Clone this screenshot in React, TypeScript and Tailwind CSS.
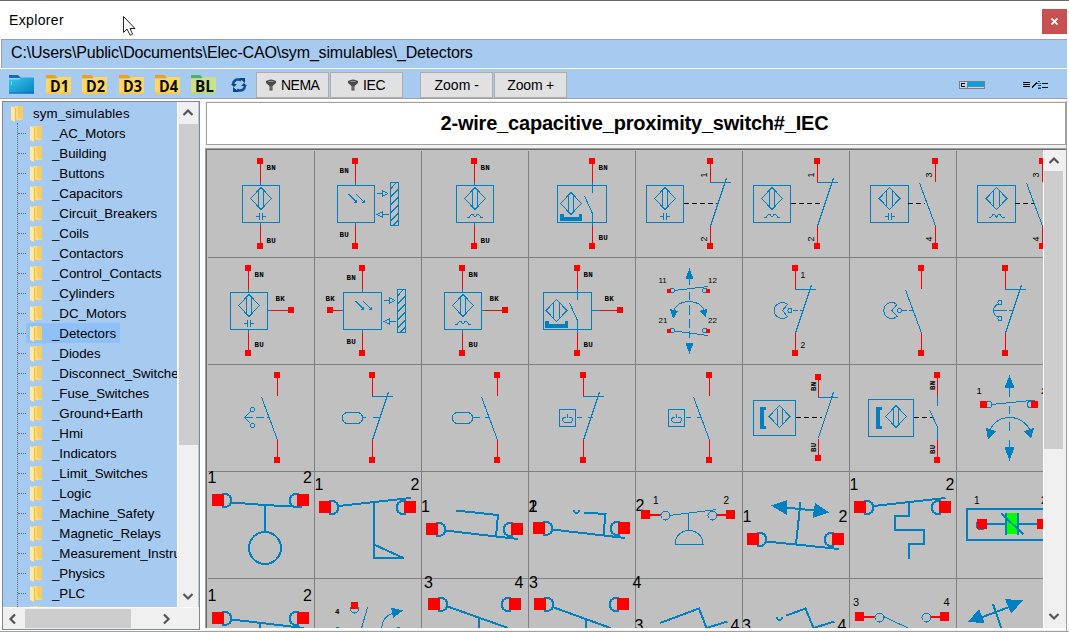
import React from "react";

const BLUE = "#0080c0";
const RED = "#ff0000";

/* ---------- drawing primitives (sheet coordinates) ---------- */

const B = ({ d, w = 1, dash }: { d: string; w?: number; dash?: string }) => (
  <path d={d} fill="none" stroke={BLUE} strokeWidth={w} strokeDasharray={dash} />
);
const F = ({ d }: { d: string }) => <path d={d} fill={BLUE} />;
const R = ({ d, w = 1 }: { d: string; w?: number }) => (
  <path d={d} fill="none" stroke={RED} strokeWidth={w} />
);
const K = ({ x1, x2, y }: { x1: number; x2: number; y: number }) => (
  <path d={`M${x1} ${y}H${x2}`} stroke="#000" strokeDasharray="5 3" fill="none" />
);
const Sq = ({ x, y, s = 6 }: { x: number; y: number; s?: number }) => (
  <rect x={x - s / 2} y={y - s / 2} width={s} height={s} fill={RED} />
);
const Box = ({ x, y, w, h, rx = 0, sw = 1 }: { x: number; y: number; w: number; h: number; rx?: number; sw?: number }) => (
  <rect x={x} y={y} width={w} height={h} rx={rx} fill="none" stroke={BLUE} strokeWidth={sw} />
);
const Ring = ({ x, y, r, w = 1 }: { x: number; y: number; r: number; w?: number }) => (
  <circle cx={x} cy={y} r={r} fill="none" stroke={BLUE} strokeWidth={w} />
);

/* two-letter wire colour code */
const Wire = ({ x, y, t, turn }: { x: number; y: number; t: string; turn?: boolean }) => (
  <text
    x={x}
    y={y}
    transform={turn ? `rotate(-90 ${x} ${y})` : undefined}
    fontFamily="'Liberation Mono', monospace"
    fontWeight="700"
    fontSize="7.5"
    letterSpacing="0.3"
    fill="#000"
  >
    {t}
  </text>
);
const Num = ({ x, y, t, s = 16, turn }: { x: number; y: number; t: string; s?: number; turn?: boolean }) => (
  <text
    x={x}
    y={y}
    transform={turn ? `rotate(-90 ${x} ${y})` : undefined}
    fontFamily="'Liberation Sans', sans-serif"
    fontSize={s}
    fill="#000"
  >
    {t}
  </text>
);

const Diamond = ({ x, y, b = 2.5 }: { x: number; y: number; b?: number }) => (
  <B
    d={`M${x - 10.5} ${y}L${x} ${y - 11}L${x + 10.5} ${y}L${x} ${y + 11}ZM${x - b} ${y - 8}V${y + 8}M${x + b} ${y - 8}V${y + 8}`}
  />
);
const Cap = ({ x, y }: { x: number; y: number }) => (
  <B d={`M${x - 5} ${y}h3.5M${x - 1.5} ${y - 4}v7M${x + 1.5} ${y - 4}v7M${x + 1.5} ${y}h3.5`} />
);
const Coil = ({ x, y }: { x: number; y: number }) => (
  <B d={`M${x - 8} ${y + 1}h2l2.5-3h1.5l2 2.500l2-2.500h1.500l2.500 3h2`} />
);
const Cup = ({ x, y, w }: { x: number; y: number; w: number }) => (
  <F d={`M${x} ${y}h4v3h${w - 7}v-3h3v7h${-w}z`} />
);
const Bracket = ({ x, y }: { x: number; y: number }) => <F d={`M${x} ${y}h6v3h-2v16h2v3h-6z`} />;

/* vertical pole: terminals at top and bottom with red leads */
const Pole = ({ x, y }: { x: number; y: number }) => (
  <>
    <R d={`M${x + 0.5} ${y}v21M${x + 0.5} ${y + 65}v20`} />
    <Sq x={x} y={y} />
    <Sq x={x} y={y + 85} />
  </>
);
const NC = ({ x, y }: { x: number; y: number }) => (
  <B d={`M${x} ${y + 21.5}h21M${x + 16.5} ${y + 17}L${x + 0.5} ${y + 65}`} />
);
const NO = ({ x, y }: { x: number; y: number }) => <B d={`M${x - 15.5} ${y + 22}L${x + 0.5} ${y + 65}`} />;

const Photo = ({ x, y }: { x: number; y: number }) => (
  <>
    <B d={`M${x} ${y}l8 8M${x + 7.5} ${y}l8 8`} />
    <F d={`M${x + 8.5} ${y + 8.5}h-3l3-3zM${x + 16} ${y + 8.5}h-3l3-3z`} />
    <B d={`M${x + 28} ${y - 0.5}h6m6 0l-6-2.500v5l6-2.500M${x + 40} ${y + 20.5}h-6m-6 0l6-2.500v5l-6-2.500`} />
    <Box x={x + 42} y={y - 11.5} w={8} h={43} />
    <B
      d={`M${x + 42} ${y - 5}l6-6.5M${x + 42} ${y + 3}l8-8M${x + 42} ${y + 11}l8-8M${x + 42} ${y + 19}l8-8M${x + 42} ${y + 27}l8-8M${x + 45} ${y + 31}l5-5`}
    />
  </>
);

/* large horizontal contact: x,y is the top-left of the left terminal */
const Lugs = ({ x, y, gap = 85 }: { x: number; y: number; gap?: number }) => (
  <>
    <B w={2} d={`M${x + 10} ${y}h4q5 1 5 6.5q0 5.5-5 6.5h-4M${x + gap + 2} ${y}h-4q-5 1-5 6.5q0 5.5 5 6.5h4`} />
    <rect x={x} y={y} width="12" height="12" fill={RED} />
    <rect x={x + gap} y={y} width="12" height="12" fill={RED} />
  </>
);
const Terminals = ({ x, y }: { x: number; y: number }) => (
  <>
    <R w={2} d={`M${x} ${y}h16M${x + 72} ${y}h10`} />
    <Sq x={x + 0.5} y={y - 0.5} s={9} />
    <Sq x={x + 85.5} y={y - 0.5} s={9} />
    <Ring x={x + 20.5} y={y + 0.5} r={4.5} />
    <Ring x={x + 67.5} y={y + 0.5} r={4.5} />
  </>
);
const Mushroom = ({ x, y }: { x: number; y: number }) => (
  <>
    <B d={`M${x + 5} ${y - 6}a8 8 0 1 0 0 12l-5-6l5-6`} />
    <Ring x={x + 7.5} y={y} r={2} />
    <B d={`M${x + 10} ${y}h11`} dash="5 2" />
  </>
);
const Foot = ({ x, y }: { x: number; y: number }) => (
  <>
    <B d={`M${x} ${y}h25`} dash="8 3" />
    <B d={`M${x + 6} ${y - 6}L${x} ${y}L${x + 6} ${y + 6}`} />
    <Ring x={x + 8} y={y - 8} r={2} />
    <Ring x={x + 8} y={y + 8} r={2} />
  </>
);
const Key = ({ x, y }: { x: number; y: number }) => (
  <>
    <Box x={x} y={y} w={16} h={17} />
    <B d={`M${x + 8} ${y + 4}v4M${x + 6} ${y + 8}h-2q-2 3 1 5h6q4-3 1-5h-3M${x + 7} ${y + 13}h5`} />
    <B d={`M${x + 17} ${y + 8}h5M${x + 28} ${y + 8}h5`} />
  </>
);

/* ---------- symbol library, one entry for each tile ---------- */

const SYMBOLS: React.ReactNode[] = [
  // row 1
  <>
    <Pole x={260} y={161} /><B d="M260.5 182v4M260.5 222v4" /><Box x={242.5} y={185.5} w={37} h={37} />
    <Diamond x={261} y={198.5} /><Cap x={261} y={216.5} /><Wire x={266.5} y={170} t="BN" /><Wire x={266.5} y={243} t="BU" />
  </>,
  <>
    <Pole x={355} y={161} /><B d="M355.5 182v4M355.5 222v4" /><Box x={337.5} y={185.5} w={37} h={37} />
    <Photo x={348.5} y={194} /><Wire x={339.5} y={173} t="BN" /><Wire x={339.5} y={237} t="BU" />
  </>,
  <>
    <Pole x={474} y={161} /><B d="M474.5 182v4M474.5 222v4" /><Box x={456.5} y={185.5} w={37} h={37} />
    <Diamond x={475} y={198.5} /><Coil x={475} y={216.5} /><Wire x={480.5} y={170} t="BN" /><Wire x={480.5} y={243} t="BU" />
  </>,
  <>
    <Pole x={592} y={161} /><B d="M592.5 182v11M584.5 196L592.5 213.5V226" /><Box x={557.5} y={185.5} w={49} h={37} />
    <Diamond x={571} y={203.5} /><Cup x={560} y={214} w={22} /><Wire x={598.5} y={170} t="BN" /><Wire x={598.5} y={240} t="BU" />
  </>,
  <>
    <Pole x={710} y={161} /><NC x={710} y={161} /><Box x={646.5} y={185.5} w={37} h={37} />
    <Diamond x={665} y={198.5} /><Cap x={665} y={216.5} /><K x1={684} x2={717} y={203.5} />
    <Num x={707} y={177.5} t="1" s={9} turn /><Num x={707} y={241.5} t="2" s={9} turn />
  </>,
  <>
    <Pole x={817} y={161} /><NC x={817} y={161} /><Box x={753.5} y={185.5} w={37} h={37} />
    <Diamond x={772} y={198.5} /><Coil x={772} y={216.5} /><K x1={791} x2={822} y={203.5} />
    <Num x={814} y={177.5} t="1" s={9} turn /><Num x={814} y={241.5} t="2" s={9} turn />
  </>,
  <>
    <Pole x={935} y={161} /><NO x={935} y={161} /><Box x={870.5} y={185.5} w={38} h={37} />
    <Diamond x={889.5} y={198.5} b={3} /><Cap x={890} y={216.5} /><K x1={908} x2={925} y={203.5} />
    <Num x={931.5} y={177.5} t="3" s={9} turn /><Num x={931.5} y={241.5} t="4" s={9} turn />
  </>,
  <>
    <Pole x={1042} y={161} /><NO x={1042} y={161} /><Box x={977.5} y={185.5} w={38} h={37} />
    <Diamond x={996.5} y={198.5} b={3} /><Coil x={996.5} y={216.5} /><K x1={1015} x2={1034} y={203.5} />
    <Num x={1038.5} y={177.5} t="3" s={9} turn /><Num x={1038.5} y={241.5} t="4" s={9} turn />
  </>,
  // row 2
  <>
    <Pole x={248} y={268} /><B d="M248.5 289v4M248.5 329v4M268 310.5h4" /><R d="M271 310.5h18" /><Sq x={291} y={310} />
    <Box x={230.5} y={292.5} w={37} h={37} /><Diamond x={249} y={305.5} /><Cap x={249} y={323.5} />
    <Wire x={254.5} y={277} t="BN" /><Wire x={275.5} y={301} t="BK" /><Wire x={254.5} y={347} t="BU" />
  </>,
  <>
    <Pole x={362} y={268} /><B d="M362.5 289v4M362.5 329v4M340 310.5h4" /><R d="M330 310.5h11" /><Sq x={330} y={310} />
    <Box x={343.5} y={292.5} w={38} h={37} /><Photo x={355.5} y={301} />
    <Wire x={346.5} y={280} t="BN" /><Wire x={325.5} y={301} t="BK" /><Wire x={346.5} y={344} t="BU" />
  </>,
  <>
    <Pole x={462} y={268} /><B d="M462.5 289v4M462.5 329v4M482 310.5h4" /><R d="M485 310.5h18" /><Sq x={505} y={310} />
    <Box x={444.5} y={292.5} w={37} h={37} /><Diamond x={463} y={305.5} /><Coil x={463} y={323.5} />
    <Wire x={468.5} y={277} t="BN" /><Wire x={489.5} y={301} t="BK" /><Wire x={468.5} y={347} t="BU" />
  </>,
  <>
    <Pole x={577} y={268} /><B d="M577.5 289v11M569.5 303L577.5 320.5V333M592 310.5h8" /><R d="M600 310.5h18" /><Sq x={620} y={310} />
    <Box x={543.5} y={292.5} w={48} h={37} /><Diamond x={556.5} y={310.5} b={3} /><Cup x={545} y={321} w={23} />
    <Wire x={583.5} y={277} t="BN" /><Wire x={604.5} y={301} t="BK" /><Wire x={583.5} y={347} t="BU" />
  </>,
  <>
    <B d="M689.5 279v6M689.5 292v8M689.5 305v10M689.5 319v9M689.5 331v7" />
    <F d="M689.5 268l4 11h-8zM689.5 354l4-11h-8zM670 309l8 2l-5 8zM707 309l-8 2l7 7z" />
    <B d="M673 312Q677 301.5 689 301.5T705 312M674 290.5L708 286.5M674 331L708 335.5" />
    <Ring x={672} y={290.5} r={2.5} /><Ring x={705} y={290.5} r={2.5} /><Ring x={672} y={330.5} r={2.5} /><Ring x={705} y={330.5} r={2.5} />
    <Sq x={669} y={291} s={4} /><Sq x={708} y={291} s={4} /><Sq x={669} y={331} s={4} /><Sq x={708} y={331} s={4} />
    <Num x={658.5} y={283} t="11" s={8} /><Num x={708} y={283} t="12" s={8} /><Num x={658.5} y={323} t="21" s={8} /><Num x={708} y={323} t="22" s={8} />
  </>,
  <>
    <Pole x={795} y={268} /><NC x={795} y={268} /><Mushroom x={782.5} y={310.5} />
    <Num x={800.5} y={277.5} t="1" s={8.5} /><Num x={800.5} y={347.5} t="2" s={8.5} />
  </>,
  <><Pole x={921} y={268} /><NO x={921} y={268} /><Mushroom x={892} y={310.5} /></>,
  <>
    <Pole x={1005} y={268} /><NC x={1005} y={268} /><B d="M992.5 310.5h20" dash="14 2" />
    <B d="M998 304Q994 306 993.5 310.5Q994 316 998 317" /><Ring x={1000} y={302.5} r={2} /><Ring x={1000} y={318.5} r={2} />
  </>,
  // row 3
  <><Pole x={277} y={375} /><NO x={277} y={375} /><Foot x={244.5} y={417.5} /></>,
  <><Pole x={372} y={375} /><NC x={372} y={375} /><Box x={342.5} y={412.5} w={20} h={11} rx={5} /><B d="M363 417.5h3M373 417.5h6" /></>,
  <><Pole x={497} y={375} /><NO x={497} y={375} /><Box x={452.5} y={412.5} w={20} h={11} rx={5} /><B d="M473 417.5h7M485 417.5h5" /></>,
  <><Pole x={583} y={375} /><NC x={583} y={375} /><Key x={559.5} y={409.5} /></>,
  <><Pole x={709} y={375} /><NO x={709} y={375} /><Key x={668.5} y={409.5} /></>,
  <>
    <R d="M818.5 377v20M818.5 439v19" /><Sq x={818} y={377} /><Sq x={818} y={458} />
    <B d="M818 397.5h20M833.5 392L818.5 438" /><Box x={753.5} y={400.5} w={42} h={35} />
    <Bracket x={760} y={407} /><Diamond x={779.5} y={416.5} /><K x1={796} x2={822} y={417.5} />
    <Wire x={816} y={391} t="BN" turn /><Wire x={816} y={452} t="BU" turn />
  </>,
  <>
    <R d="M937.5 375v21M937.5 440v20" /><Sq x={937} y={375} /><Sq x={937} y={460} />
    <B d="M937.5 396v10M929.5 410L937.5 427V440" /><Box x={868.5} y={399.5} w={45} h={37} />
    <Bracket x={876} y={407} /><Diamond x={896} y={416.5} /><K x1={914} x2={932} y={417.5} />
    <Wire x={935} y={390} t="BN" turn /><Wire x={935} y={454} t="BU" turn />
  </>,
  <>
    <B d="M1009.5 388v9M1009.5 406v8M1009.5 422v9M1009.5 440v8" />
    <F d="M1009.5 375l5 13h-10zM1009.5 461l5-14h-10zM986 428l10 3l-8 9zM1034 428l-10 3l7 8z" />
    <B d="M990 430Q996 417.5 1009.5 417.5T1030 430M991.5 404.5L1035.5 400" />
    <Ring x={988.5} y={404.5} r={3.5} /><Ring x={1031} y={404.5} r={3.5} />
    <Sq x={983.5} y={404.5} s={7} /><Sq x={1034.5} y={404.5} s={7} />
    <Num x={976.5} y={393.5} t="1" s={9.5} /><Num x={1041} y={393.5} t="2" s={9.5} />
  </>,
  // row 4
  <>
    <Num x={207.5} y={482.5} t="1" /><Num x={303} y={482.5} t="2" /><Lugs x={212} y={494} />
    <B w={2} d="M231.5 502.5L265 505L302 507M265 505V532" /><Ring x={265} y={548} r={16} w={2} />
  </>,
  <>
    <Num x={314.5} y={489.5} t="1" /><Num x={410.5} y={489.5} t="2" /><Lugs x={319} y={501} />
    <B w={2} d="M339 506L411 498M374 502V558H403.5L375 545" />
  </>,
  <>
    <Num x={421} y={512} t="1" /><Num x={528.5} y={512} t="2" /><Lugs x={426} y={523} />
    <B w={2} d="M445.5 530.5L496 536.5L518 539M456 510.5L498 515L496 537" />
  </>,
  <>
    <Num x={528.5} y={512} t="1" /><Num x={635.5} y={511} t="2" /><Lugs x={533} y={522} />
    <B w={2} d="M552 529.5L604 535.5L625 538M584 512.5L605.5 514L603.5 535" />
    <F d="M573 510h2v2h3v-2h2v2h-1v1h-1v1h-3v-1h-1v-1h-1z" />
  </>,
  <>
    <Terminals x={645} y={515} /><B d="M669.5 515.5L716.5 509.5M688.5 513.5V531M674.5 544.5H703.5M675 544C676 526 702 526 703 544" />
    <Num x={653} y={504} t="1" s={10} /><Num x={723.5} y={504} t="2" s={10} />
  </>,
  <>
    <Num x={742.5} y={521.5} t="1" /><Num x={838.5} y={521.5} t="2" /><Lugs x={747} y={533} />
    <B w={2} d="M766 541.5L796 544.5L839 549M800.5 502L796 544M786 507.5L814 510.5" />
    <F d="M771 505.5L787 500V515ZM829 512.5L815 503L812.5 518Z" />
  </>,
  <>
    <Num x={849.5} y={489.5} t="1" /><Num x={945.5} y={489.5} t="2" /><Lugs x={854} y={501} />
    <B w={2} d="M873.5 506L945.5 498M909 502V516H895V530H924V544H909V559" />
  </>,
  <>
    <Box x={967} y={509} w={90} h={31} sw={2} /><B w={2} d="M987 524h19M1019 524h20" />
    <Ring x={981} y={525} r={5} /><Sq x={982} y={524} s={10} /><Sq x={1042} y={524} s={10} />
    <rect x="1007" y="513" width="11" height="21" fill="#00ff00" />
    <B w={2} d="M1006 513v22M1018 513v22M1001.5 513.5L1023.5 534.5" />
    <Num x={974} y={504} t="1" s={10} /><Num x={1041} y={504} t="2" s={10} />
  </>,
  // row 5
  <>
    <Num x={207.5} y={601} t="1" /><Num x={303} y={601} t="2" /><Lugs x={212} y={612} />
    <B w={2} d="M231.5 619.5L304 628M260 623v10" />
  </>,
  <>
    <Wire x={335} y={614} t="4" /><Ring x={354.5} y={609} r={4} /><Sq x={354.5} y={605.5} s={7} />
    <B d="M367.5 607.5L361 630M381.5 628Q383 616 393 613M336 627.5h3M397 627.5h3" /><F d="M391 607.5L403 610.5L393 618Z" />
  </>,
  <>
    <Num x={424} y={588} t="3" /><Num x={514.5} y={588} t="4" /><Lugs x={428} y={598} gap={81} />
    <B w={2} d="M447.5 606.5L508 628M479 618v12" />
  </>,
  <>
    <Num x={529} y={588} t="3" /><Num x={632.5} y={588} t="4" /><Lugs x={534} y={598} gap={83} />
    <B w={2} d="M552.5 607L610.5 628M586 620v12" />
  </>,
  <><Num x={634.5} y={631} t="3" /><Num x={730.5} y={631} t="4" /><B w={2} d="M660 623L699 608.5L706.5 628L727.5 621.5" /></>,
  <>
    <Num x={742} y={631} t="3" /><Num x={837.5} y={631} t="4" />
    <B w={2} d="M786.5 615.5L805.5 608.5L813.5 628L834.5 621.5" />
    <F d="M776 617h2v2h3v-2h2v2h-1v1h-1v1h-3v-1h-1v-1h-1z" />
  </>,
  <>
    <Num x={853} y={606} t="3" s={11} /><Num x={943.5} y={606} t="4" s={11} /><Terminals x={859} y={617} />
    <B d="M883.5 616.5L908 628" />
  </>,
  <>
    <B w={2} d="M980 618L1012 606M993 604L1002 630" />
    <F d="M968 622L979 609L984.5 623ZM1023 600.5L1005 599L1011 613.5Z" />
  </>,
];

const TILE = 107;
const ORIGIN_X = 208;
const ORIGIN_Y = 151;

const Tile = ({ index, children }: { index: number; children: React.ReactNode }) => {
  const x = ORIGIN_X + (index % 8) * TILE;
  const y = ORIGIN_Y + Math.floor(index / 8) * TILE;
  return (
    <div className="h-[107px] w-[107px] border-r border-b border-[#808080]">
      <svg
        width="107"
        height="107"
        viewBox={`${x} ${y} ${TILE} ${TILE}`}
        className="block overflow-visible"
        shapeRendering="crispEdges"
      >
        {children}
      </svg>
    </div>
  );
};

/* ---------- explorer chrome ---------- */

const FOLDERS = [
  "_AC_Motors", "_Building", "_Buttons", "_Capacitors", "_Circuit_Breakers", "_Coils", "_Contactors",
  "_Control_Contacts", "_Cylinders", "_DC_Motors", "_Detectors", "_Diodes", "_Disconnect_Switches",
  "_Fuse_Switches", "_Ground+Earth", "_Hmi", "_Indicators", "_Limit_Switches", "_Logic", "_Machine_Safety",
  "_Magnetic_Relays", "_Measurement_Instruments", "_Physics", "_PLC", "_Pneumatic",
];

const TreeFolder = () => (
  <svg width="12" height="17" viewBox="0 0 12 17" className="shrink-0">
    <path d="M3 1h9v14H3z" fill="#fbd976" />
    <path d="M7 1h5v14l-5-3z" fill="#f5cc62" />
    <path d="M0 1l4 2v14l-4-2z" fill="#ffe9a6" />
    <path d="M4 3h1v13H4z" fill="#e9bd55" />
  </svg>
);

const Chevron = ({ dir }: { dir: "up" | "down" | "left" | "right" }) => {
  const d = {
    up: "M1.5 8L6 3.5L10.500 8",
    down: "M1.500 4L6 8.500L10.500 4",
    left: "M8 1.500L3.500 6L8 10.500",
    right: "M4 1.500L8.500 6L4 10.500",
  }[dir];
  return (
    <svg width="12" height="12" viewBox="0 0 12 12">
      <path d={d} fill="none" stroke="#555" strokeWidth="2.2" />
    </svg>
  );
};

const TagFolder = ({ label, green }: { label: string; green?: boolean }) => (
  <div className="flex h-[19px] w-[25px] shrink-0">
    <svg width="25" height="19" viewBox="0 0 25 19" className="overflow-visible">
      <path d="M0 0h9l3 3H0z" fill={green ? "#5cb157" : "#f0a30f"} />
      <path d="M0 4L10 4L12 2H25V19H0z" fill={green ? "#cbe08a" : "#ffd75e"} />
      <path d="M0 17H25V19H0z" fill={green ? "#bdd877" : "#f9c94a"} />
      <text
        x="4"
        y="17"
        textLength="19"
        lengthAdjust="spacingAndGlyphs"
        fontFamily="'Open Sans', sans-serif"
        fontWeight="700"
        fontSize="15.500"
        fill="#0d0d0d"
      >
        {label}
      </text>
    </svg>
  </div>
);

const Funnel = () => (
  <svg width="10" height="12" viewBox="0 0 10 12">
    <path d="M0 2q5-3 10 0v2L6.500 7v4.500h-3V7L0 4z" fill="#4a4a4a" />
    <path d="M1.500 2.500q3.500-1.500 7 0q-3.500 1.200-7 0zM4.500 7h1v3.500h-1z" fill="#8f8f8f" />
  </svg>
);

const BarButton = ({ children }: { children: React.ReactNode }) => (
  <div className="flex h-[26px] w-[73px] items-center justify-center gap-[5px] border border-[#adadad] bg-[#e1e1e1] pt-px text-[14px] whitespace-nowrap">
    {children}
  </div>
);

export default function App() {
  return (
    <div className="flex h-[632px] w-[1069px] flex-col overflow-hidden border-t border-[#696969] bg-white font-['Liberation_Sans',sans-serif] text-black">
      {/* title bar */}
      <div className="relative flex h-[38px] shrink-0 items-center justify-between pr-[2px] pl-[9px]">
        <span className="text-[14px] tracking-[0.350px]">Explorer</span>
        <div className="mt-[3px] flex h-[25px] w-[25px] items-center justify-center bg-[#c75050]">
          <svg width="7" height="7" viewBox="0 0 7 7">
            <path d="M0.500 0.500l6 6M6.500 0.500l-6 6" stroke="#fff" strokeWidth="1.800" />
          </svg>
        </div>
        <svg width="13" height="20" viewBox="0 0 13 20" className="absolute top-[15px] left-[123px]">
          <path d="M0.500 0.500v16l3.500-3.500l3 6h1.500l1-1l-2.500-5.500h5z" fill="#fff" stroke="#23232f" />
        </svg>
      </div>

      {/* path bar */}
      <div className="mr-[2px] ml-[1px] flex h-[29px] shrink-0 items-center border-t border-l border-[#a0a0a0] bg-[#a6caf0] pb-[3px] pl-[9px] text-[16px] tracking-[-0.160px]">
        C:\Users\Public\Documents\Elec-CAO\sym_simulables\_Detectors
      </div>

      {/* toolbar */}
      <div className="mr-[2px] flex h-[31px] shrink-0 items-center border-t border-b border-t-white border-b-[#a0a0a0] bg-[#a6caf0] pt-[2px] pl-[9px]">
        <svg width="25" height="19" viewBox="0 0 25 19" className="shrink-0">
          <defs>
            <linearGradient id="main-folder" x1="0" y1="0" x2="1" y2="1">
              <stop offset="0" stopColor="#35c8ea" />
              <stop offset="1" stopColor="#0b7fc4" />
            </linearGradient>
          </defs>
          <path d="M0 0h9l3 3H0z" fill="#0c6cc4" />
          <path d="M0 4.500H10L12 2.500H25V18.500H0z" fill="url(#main-folder)" />
          <path d="M0 17.500h25v1H0z" fill="#0a66b0" />
          <path d="M2 7h1M2 9h1" stroke="#a8eefa" />
        </svg>
        <div className="ml-[12px] flex gap-[11.300px]">
          <TagFolder label="D1" />
          <TagFolder label="D2" />
          <TagFolder label="D3" />
          <TagFolder label="D4" />
          <TagFolder label="BL" green />
        </div>
        <svg width="16" height="14" viewBox="0 0 16 14" className="ml-[15px] shrink-0">
          <path d="M2 6Q3 1 8 1.500L10 2.500" fill="none" stroke="#0b4fa0" strokeWidth="2.500" />
          <path d="M0 6h6L3 9zM8 0h6v5z" fill="#0b3f88" />
          <path d="M14 8Q13 13 8 12.500L6 11.500" fill="none" stroke="#0b4fa0" strokeWidth="2.500" />
          <path d="M16 8h-6l3-3zM8 14H2V9z" fill="#0b3f88" />
        </svg>
        <div className="ml-[9px] flex gap-px">
          <BarButton><Funnel /><span className="tracking-[-0.500px]">NEMA</span></BarButton>
          <BarButton><Funnel /><span className="tracking-[-0.300px]">IEC</span></BarButton>
        </div>
        <div className="ml-[17px] flex gap-px">
          <BarButton><span>Zoom -</span></BarButton>
          <BarButton><span className="tracking-[-0.200px]">Zoom +</span></BarButton>
        </div>
        <svg width="26" height="8" viewBox="0 0 26 8" shapeRendering="crispEdges" className="ml-auto shrink-0">
          <rect x="0.500" y="0.500" width="25" height="7" fill="#b9d6f2" stroke="#808080" />
          <path d="M8 0h1v8H8z" fill="#808080" />
          <path d="M9 1h16v4H9z" fill="#00a2e8" />
          <path d="M9 5h16v1H9z" fill="#808080" />
          <path d="M2.500 2v4M2 2.500h4M2 5.500h4" stroke="#000" />
        </svg>
        <svg width="25" height="8" viewBox="0 0 25 8" shapeRendering="crispEdges" className="mr-[19px] ml-[38px] shrink-0">
          <path d="M0 1.500h7M0 3.500h7M0 5.500h7M9 6.500l5-5M19 2.500h6M19 6.500h6" stroke="#000" />
          <path d="M15 0.500h2M14 2.500h4M15 4.500h3M15 7.500h3" stroke="#1a4a66" />
          <path d="M15 2h2v1h-2zM15 6h3v1h-3z" fill="#00a2e8" />
        </svg>
      </div>

      {/* body */}
      <div className="flex min-h-0 flex-1 pt-[2px]">
        {/* tree panel */}
        <div className="ml-[2px] flex h-[529px] w-[198px] shrink-0 flex-col border border-[#7f8794] bg-[#f0f0f0]">
          <div className="flex h-[505px] shrink-0">
            <div className="w-[174px] overflow-hidden bg-[#a6caf0] pt-px pl-[8px]">
              <div className="flex h-5 items-center text-[13.300px]">
                <TreeFolder />
                <span className="ml-[10px] pt-[2px] tracking-[0.150px]">sym_simulables</span>
              </div>
              <div className="ml-[6px] border-l border-dotted border-[#5a6b80]">
                {FOLDERS.map((name) => (
                  <div key={name} className="flex h-5 items-center text-[13.300px] whitespace-nowrap">
                    <span className="w-[8px] shrink-0 border-t border-dotted border-[#5a6b80]" />
                    <div
                      className={
                        name === "_Detectors"
                          ? "flex h-5 items-center bg-[#90c0f8] pr-1 pl-1"
                          : "flex h-5 items-center pl-1"
                      }
                    >
                      <TreeFolder />
                      <span className="ml-[10px] pt-[2px] leading-5 tracking-[-0.030px]">{name}</span>
                    </div>
                  </div>
                ))}
              </div>
            </div>
            <div className="flex w-[21px] flex-col items-center border-l border-white">
              <div className="flex h-[22px] items-center"><Chevron dir="up" /></div>
              <div className="h-[321px] w-[19px] bg-[#cdcdcd]" />
              <div className="mt-auto flex h-[22px] items-center"><Chevron dir="down" /></div>
            </div>
            <div className="w-px bg-[#a6caf0]" />
          </div>
          <div className="flex h-[22px] items-center border-t border-white pl-[4px]">
            <Chevron dir="left" />
            <div className="ml-[6px] h-[19px] w-[106px] bg-[#cdcdcd]" />
            <div className="ml-[29px] flex"><Chevron dir="right" /></div>
          </div>
        </div>

        {/* right side */}
        <div className="ml-[5px] flex w-[862px] shrink-0 flex-col border-r border-[#a0a0a0] bg-[#f0f0f0]">
          <div className="mt-px ml-px flex h-[43px] w-[860px] shrink-0 items-center justify-center border border-[#a0a0a0] bg-white pr-[3px] pb-px text-[20px] font-bold tracking-[-0.200px]">
            2-wire_capacitive_proximity_switch#_IEC
          </div>
          <div className="mt-[3px] flex h-[480px] shrink-0 border-t border-l border-[#a0a0a0]">
            <div className="flex min-w-0 flex-1 border-t border-l border-[#696969]">
              <div className="h-[478px] w-[836px] shrink-0 overflow-hidden bg-[#c0c0c0] pt-px pl-px">
                <div className="grid w-[856px] grid-cols-8">
                  {SYMBOLS.map((symbol, i) => (
                    <Tile key={i} index={i}>{symbol}</Tile>
                  ))}
                </div>
              </div>
              <div className="flex h-[478px] w-[21px] shrink-0 flex-col items-center border-l border-white pr-px">
                <div className="flex h-[21px] items-center"><Chevron dir="up" /></div>
                <div className="h-[278px] w-[19px] bg-[#cdcdcd]" />
                <div className="mt-auto flex h-[24px] items-center"><Chevron dir="down" /></div>
              </div>
            </div>
          </div>
          <div className="h-[2px] bg-white" />
        </div>
      </div>
      <div className="h-px shrink-0 bg-[#a0a0a0]" />
    </div>
  );
}
